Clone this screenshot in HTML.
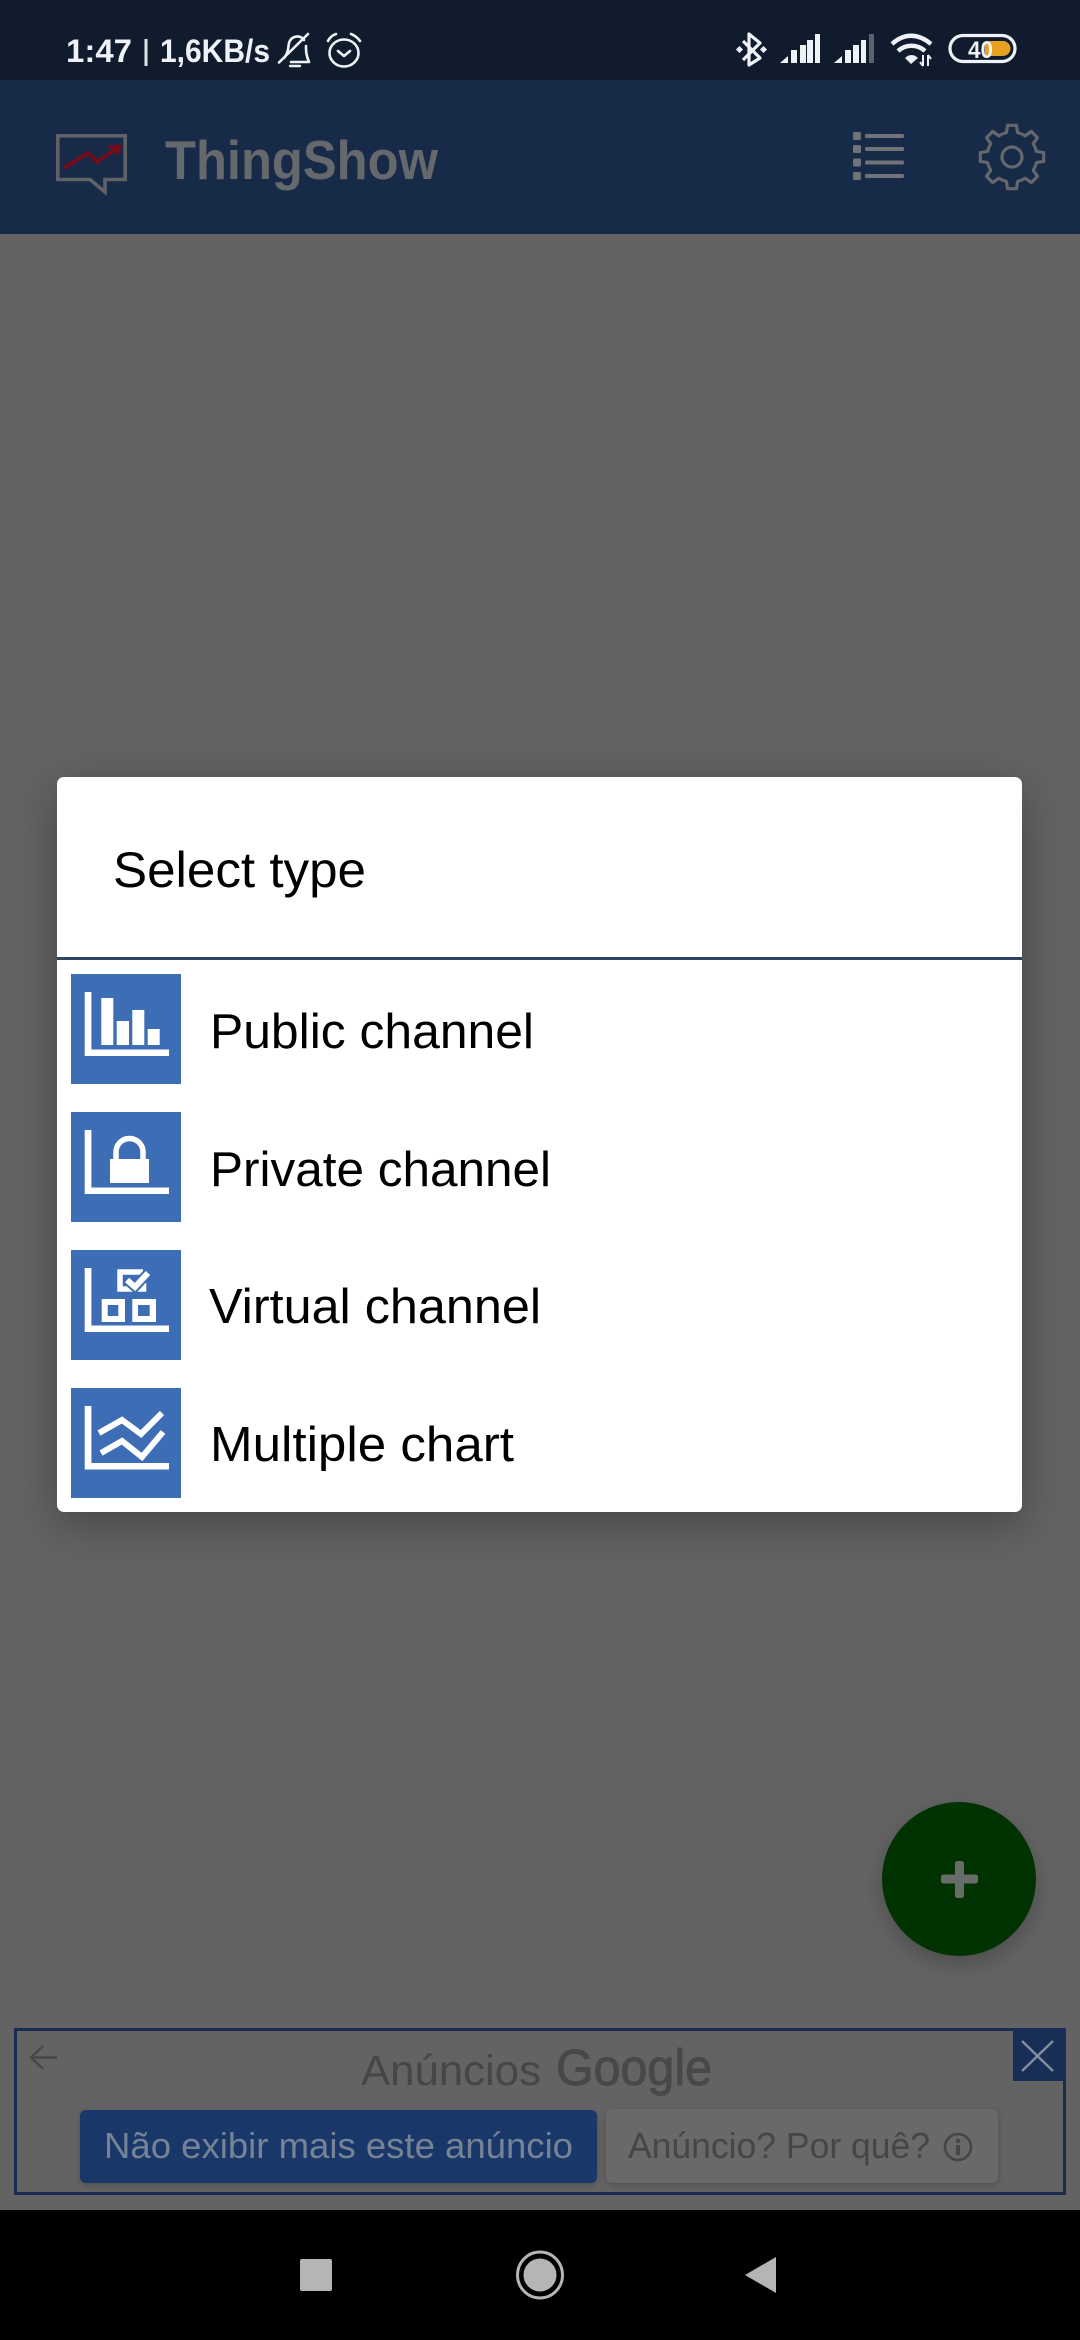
<!DOCTYPE html>
<html><head><meta charset="utf-8"><style>
html,body{margin:0;padding:0;background:#636363}
#p{position:relative;width:1080px;height:2340px;overflow:hidden;background:#636363;font-family:"Liberation Sans",sans-serif}
#p div{position:absolute}
svg{position:absolute;left:0;top:0}
text{font-family:"Liberation Sans",sans-serif}
</style></head><body><div id="p">
<div style="left:0;top:0;width:1080px;height:80px;background:#101c2e"></div>
<div style="left:0;top:80px;width:1080px;height:154px;background:#172a48"></div>
<div style="left:0;top:2210px;width:1080px;height:130px;background:#000"></div>
<div style="left:57px;top:777px;width:965px;height:735px;background:#fff;border-radius:7px;box-shadow:0 12px 44px rgba(0,0,0,.3)"></div>
<div style="left:882px;top:1802px;width:154px;height:154px;border-radius:50%;background:#013201;box-shadow:0 8px 22px rgba(0,0,0,.22)"></div>
<div style="left:80px;top:2110px;width:517px;height:73px;border-radius:6px;background:#193769;box-shadow:0 2px 6px rgba(0,0,0,.2)"></div>
<div style="left:606px;top:2109px;width:392px;height:74px;border-radius:6px;background:#696969;box-shadow:0 2px 6px rgba(0,0,0,.2)"></div>
<svg width="1080" height="2340" viewBox="0 0 1080 2340" xmlns="http://www.w3.org/2000/svg">
<!-- status bar -->
<g font-size="32" font-weight="700" fill="#eef1f5">
<text x="66" y="62" textLength="66" lengthAdjust="spacingAndGlyphs">1:47</text>
<text x="160" y="62" textLength="110" lengthAdjust="spacingAndGlyphs">1,6KB/s</text>
</g>
<rect x="144.500" y="39" width="3" height="27" fill="#dfe3e8"/>
<g fill="none" stroke="#eef1f5" stroke-width="2.600" stroke-linecap="round" stroke-linejoin="round">
<path d="M279 62.500 L308 34"/>
<path d="M284 58 C289 52 288 47 289 43 C291 36 300 34 304 40"/>
<path d="M306 46 C306 51 306 55 309 62 L291 62"/>
<path d="M290 66 H300" stroke-width="2.400"/>
<ellipse cx="344" cy="53" rx="14.500" ry="13.500"/>
<path d="M338 51 L344 56 L350 51"/>
<path d="M328 41 C330 37 333 35 336 34"/>
<path d="M351 34 C354 35 358 38 360 41"/>
</g>
<g fill="none" stroke="#eef1f5" stroke-width="3.200" stroke-linejoin="round">
<path d="M743 41 L760 58 L749 65 V34 L760 43 L743 60"/>
</g>
<rect x="737" y="47" width="5" height="5" fill="#eef1f5" transform="rotate(45 739.500 49.500)"/>
<rect x="761" y="47" width="5" height="5" fill="#eef1f5" transform="rotate(45 763.500 49.500)"/>
<g fill="#eef1f5">
<path d="M780 63 L788 56 V63 Z"/><rect x="791" y="50" width="6" height="13"/><rect x="800" y="45" width="6" height="18"/><rect x="807" y="40" width="6" height="23"/><rect x="815" y="34" width="5" height="29"/>
<path d="M834 63 L842 56 V63 Z"/><rect x="845" y="50" width="6" height="13"/><rect x="853" y="45" width="6" height="18"/><rect x="861" y="40" width="5" height="23"/>
<rect x="869" y="34" width="5" height="29" fill="#5a6270"/>
</g>
<g fill="none" stroke="#eef1f5" stroke-width="4.400">
<path d="M892 44 C904 33 918 33 931 44"/>
<path d="M898 51 C906 44 917 44 925 51"/>
</g>
<path d="M905 58 C909 54 914 54 918 58 L911 64 Z" fill="#eef1f5"/>
<path d="M923 55 V66 M920 62 L923 66 M928 66 V55 M928 55 L931 59" stroke="#eef1f5" stroke-width="2" fill="none"/>
<rect x="950" y="35.500" width="65" height="26" rx="13" fill="none" stroke="#eef1f5" stroke-width="3.200"/>
<path d="M985 41 H1003 A7.500 7.500 0 0 1 1003 56 H985 Z" fill="#e8a020"/>
<text x="968" y="58" font-size="24" font-weight="700" fill="#eef1f5" textLength="25" lengthAdjust="spacingAndGlyphs">40</text>
<!-- app bar -->
<g fill="none" stroke="#5f6266" stroke-width="3.600">
<path d="M57.800 135.800 H125.200 V179.500 H105 V192 L90 179.500 H57.800 Z"/>
</g>
<path d="M64 168 L88 153 L97 162 L114 150" fill="none" stroke="#730c1c" stroke-width="4"/>
<path d="M122 144 L107 146 L119 156 Z" fill="#730c1c"/>
<text x="165" y="179" font-size="55" font-weight="700" fill="#65696d" textLength="273" lengthAdjust="spacingAndGlyphs">ThingShow</text>
<g fill="#707377">
<rect x="853" y="132" width="8" height="8" rx="1.500"/><rect x="853" y="145" width="8" height="8" rx="1.500"/><rect x="853" y="158.500" width="8" height="8" rx="1.500"/><rect x="853" y="172" width="8" height="8" rx="1.500"/>
<rect x="865" y="134" width="39" height="4" rx="1.500"/><rect x="865" y="147" width="39" height="4" rx="1.500"/><rect x="865" y="160.500" width="39" height="4" rx="1.500"/><rect x="865" y="174" width="39" height="4" rx="1.500"/>
</g>
<g transform="translate(1012 157)" fill="none" stroke="#64676b" stroke-width="3.200" stroke-linejoin="round">
<circle r="10"/>
<path id="t" d="M-9.570 -23.100 L-5.600 -24.400 L-4.450 -31.700 L4.450 -31.700 L5.600 -24.400 L9.570 -23.100"/>
<use href="#t" transform="rotate(45)"/><use href="#t" transform="rotate(90)"/><use href="#t" transform="rotate(135)"/><use href="#t" transform="rotate(180)"/><use href="#t" transform="rotate(225)"/><use href="#t" transform="rotate(270)"/><use href="#t" transform="rotate(315)"/>
</g>
<!-- dialog -->
<text x="113" y="887" font-size="50" fill="#000" textLength="253" lengthAdjust="spacingAndGlyphs">Select type</text>
<rect x="57" y="957" width="965" height="3" fill="#2d4463"/>
<rect x="71" y="974" width="110" height="110" fill="#3d6db4"/>
<rect x="71" y="1112" width="110" height="110" fill="#3d6db4"/>
<rect x="71" y="1250" width="110" height="110" fill="#3d6db4"/>
<rect x="71" y="1388" width="110" height="110" fill="#3d6db4"/>
<g fill="#fff">
<g transform="translate(71 974)">
<path d="M13.700 18 H20.400 V75.500 H98 V82 H13.700 Z"/>
<rect x="30.300" y="24" width="12" height="47"/><rect x="45.700" y="47" width="12.300" height="24"/><rect x="61.300" y="36" width="12" height="35"/><rect x="76.700" y="55" width="12" height="16"/>
</g>
<g transform="translate(71 1112)">
<path d="M13.700 18 H20.400 V75.500 H98 V82 H13.700 Z"/>
<rect x="39" y="47" width="39" height="24"/>
<path d="M45 48 V40 A13.500 13.500 0 0 1 72 40 V48" fill="none" stroke="#fff" stroke-width="5.500"/>
</g>
<g transform="translate(71 1250)">
<path d="M13.700 18 H20.400 V75.500 H98 V82 H13.700 Z"/>
<path d="M30.700 49 H54 V72 H30.700 Z M36.700 55 V66 H47.300 V55 Z" fill-rule="evenodd"/>
<path d="M61.300 49 H85 V72 H61.300 Z M67 55 V66 H78.700 V55 Z" fill-rule="evenodd"/>
<path d="M72 22 H49 V39 H72.500 V33" fill="none" stroke="#fff" stroke-width="5.500"/>
<path d="M56 30 L64 37 L77 23" fill="none" stroke="#3d6db4" stroke-width="10"/>
<path d="M56 30 L64 37 L77 23" fill="none" stroke="#fff" stroke-width="6"/>
</g>
<g transform="translate(71 1388)">
<path d="M13.700 18 H20.400 V75 H98 V81.500 H13.700 Z"/>
<path d="M28 45 L51 32 L70 46 L91 25" fill="none" stroke="#fff" stroke-width="6"/>
<path d="M30 65 L51 53 L71 69 L92 44" fill="none" stroke="#fff" stroke-width="6"/>
</g>
</g>
<g font-size="49" fill="#000">
<text x="210" y="1048" textLength="324" lengthAdjust="spacingAndGlyphs">Public channel</text>
<text x="210" y="1186" textLength="341" lengthAdjust="spacingAndGlyphs">Private channel</text>
<text x="209" y="1323" textLength="332" lengthAdjust="spacingAndGlyphs">Virtual channel</text>
<text x="210" y="1461" textLength="304" lengthAdjust="spacingAndGlyphs">Multiple chart</text>
</g>
<!-- fab -->
<rect x="941" y="1874.500" width="37" height="9" rx="2.500" fill="#676d68"/>
<rect x="955" y="1861" width="9" height="37" rx="2.500" fill="#676d68"/>
<!-- ad -->
<rect x="15.500" y="2029.500" width="1049" height="164" fill="none" stroke="#1a2c4e" stroke-width="3"/>
<rect x="1013" y="2028" width="53" height="53" fill="#182e57"/>
<path d="M1022 2041 L1053 2071 M1053 2041 L1022 2071" stroke="#848e9c" stroke-width="2.400"/>
<path d="M57 2057.500 H32 M43 2046 L31 2057.500 L43 2069" fill="none" stroke="#474747" stroke-width="2.400"/>
<text x="361" y="2085" font-size="43" fill="#464646" textLength="180" lengthAdjust="spacingAndGlyphs">Anúncios</text>
<text x="556" y="2085" font-size="51" fill="#484848" stroke="#484848" stroke-width="1" textLength="156" lengthAdjust="spacingAndGlyphs">Google</text>
<text x="104" y="2158" font-size="36" fill="#768395" textLength="469" lengthAdjust="spacingAndGlyphs">Não exibir mais este anúncio</text>
<text x="628" y="2158" font-size="36" fill="#464646" textLength="302" lengthAdjust="spacingAndGlyphs">Anúncio? Por quê?</text>
<circle cx="958" cy="2147" r="13" fill="none" stroke="#464646" stroke-width="2.600"/>
<rect x="956" y="2145" width="4" height="10" fill="#464646"/><rect x="956" y="2139" width="4" height="4" fill="#464646"/>
<!-- nav -->
<rect x="300" y="2259" width="32" height="32" rx="2" fill="#b5b5b5"/>
<ellipse cx="540" cy="2275" rx="22.500" ry="23" fill="none" stroke="#b5b5b5" stroke-width="3"/>
<ellipse cx="540" cy="2275" rx="16.500" ry="16.500" fill="#b5b5b5"/>
<path d="M745 2275 L776 2257 V2293 Z" fill="#b5b5b5"/>
</svg>
</div></body></html>
